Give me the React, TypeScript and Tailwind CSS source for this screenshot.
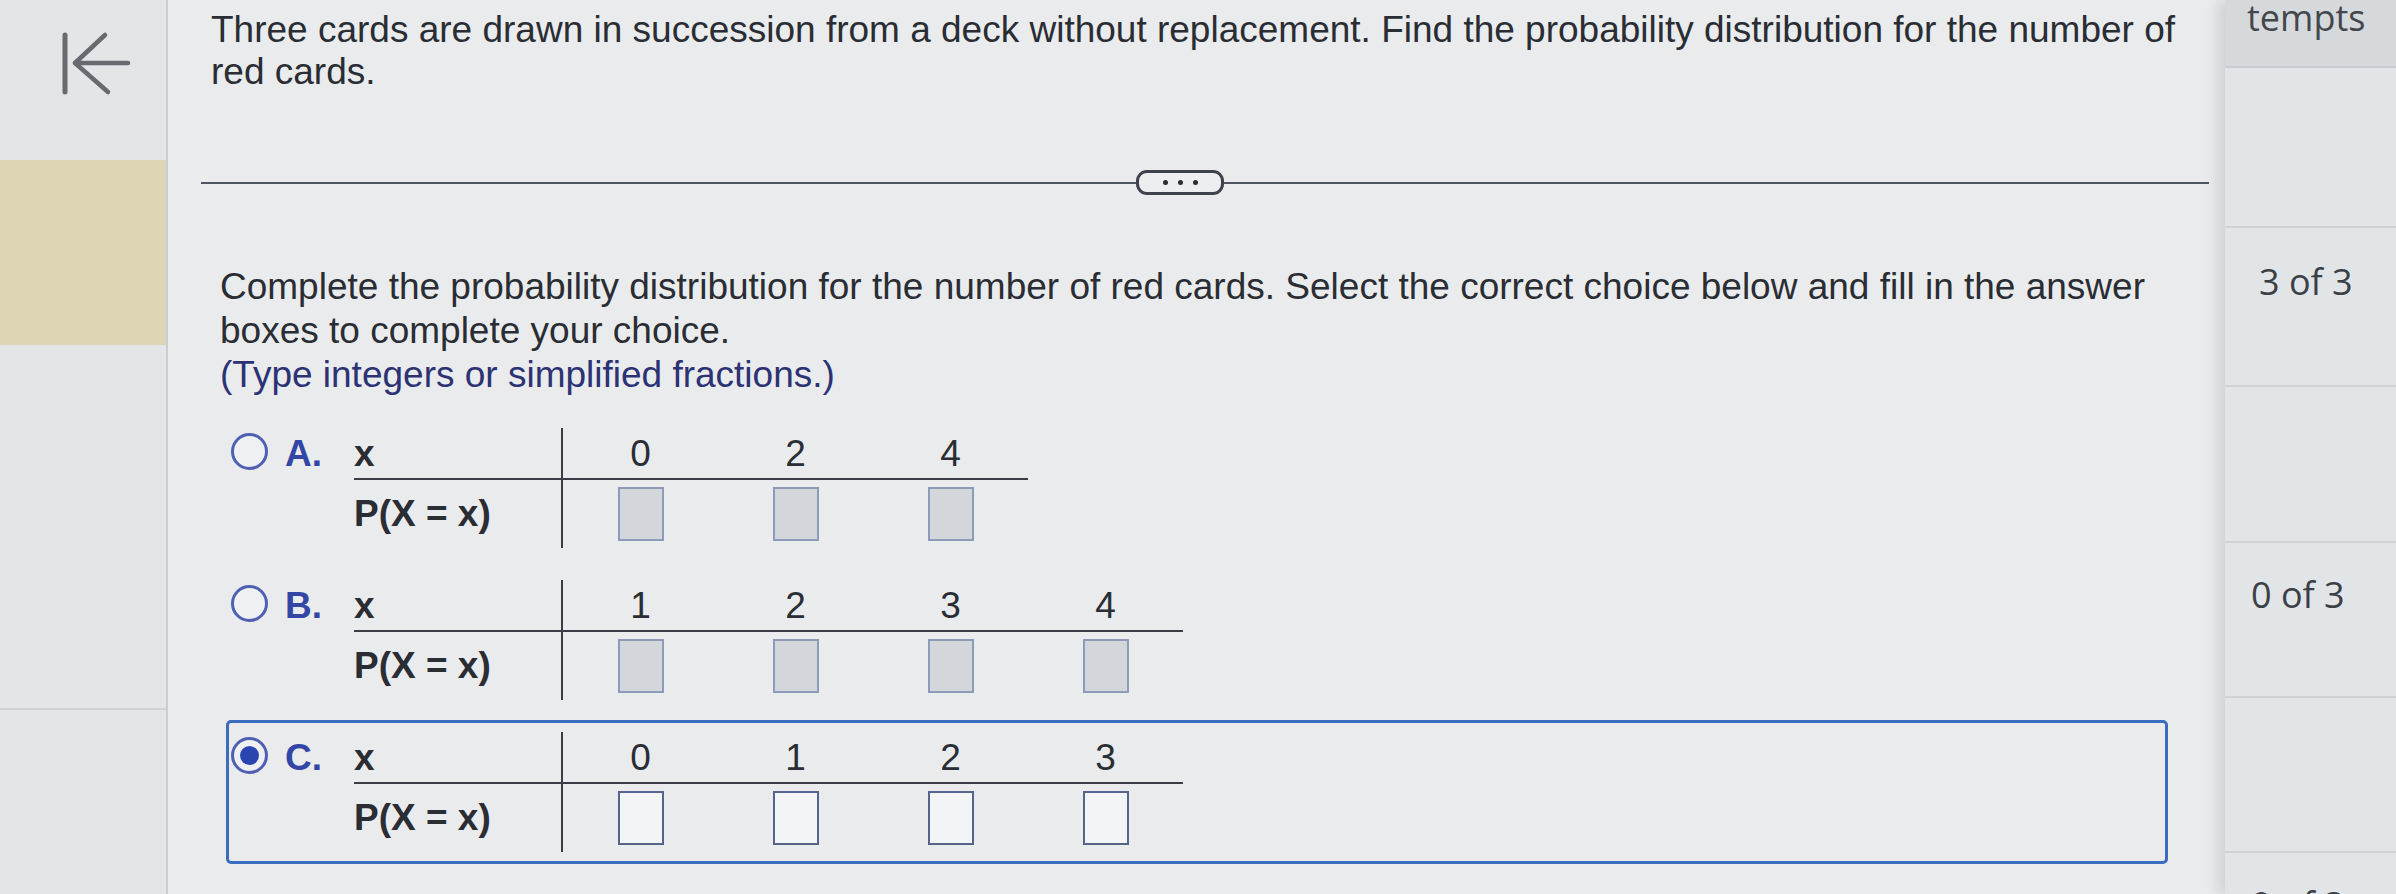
import React from "react";

type Choice = {
  letter: string;
  values: string[];
  selected?: boolean;
};

const choices: Choice[] = [
  { letter: "A.", values: ["0", "2", "4"] },
  { letter: "B.", values: ["1", "2", "3", "4"] },
  { letter: "C.", values: ["0", "1", "2", "3"], selected: true },
];

const gridCols: Record<number, string> = {
  3: "grid-cols-[209px_repeat(3,155px)]",
  4: "grid-cols-[209px_repeat(4,155px)]",
};

function BackIcon() {
  return (
    <svg width="80" height="70" viewBox="0 0 80 70" fill="none" aria-hidden="true">
      <path d="M10 5 V62" stroke="#676b70" strokeWidth="5" strokeLinecap="round" />
      <path d="M20 33 H73" stroke="#676b70" strokeWidth="4.5" strokeLinecap="round" />
      <path d="M50 5 L20 33 L53 62" stroke="#676b70" strokeWidth="4.5" strokeLinecap="round" strokeLinejoin="round" />
    </svg>
  );
}

function Radio({ checked }: { checked?: boolean }) {
  return (
    <div className="mt-[5px] flex h-[37px] w-[37px] shrink-0 items-center justify-center rounded-full border-[3px] border-[#4f5fb2] bg-[#eef0f3]">
      {checked ? <div className="h-[19px] w-[19px] rounded-full bg-[#2b45b0]" /> : null}
    </div>
  );
}

function AnswerBox({ active }: { active?: boolean }) {
  return active ? (
    <div className="h-[54px] w-[46px] border-2 border-[#56648c] bg-[#f3f4f6]" />
  ) : (
    <div className="h-[54px] w-[46px] border-2 border-[#8e9bb8] bg-[#d3d6da]" />
  );
}

function ChoiceRow({ choice }: { choice: Choice }) {
  return (
    <div
      className={
        choice.selected
          ? "flex items-start rounded-[5px] border-[3px] border-[#3b6cc0] px-[2px] py-[9px]"
          : "flex items-start rounded-[5px] border-[3px] border-transparent px-[2px] py-[9px]"
      }
    >
      <Radio checked={choice.selected} />
      <div className="ml-[17px] w-[69px] text-[37px] font-bold leading-[52px] text-[#3346a6]">
        {choice.letter}
      </div>
      <div className={`grid ${gridCols[choice.values.length]}`}>
        <div className="h-[52px] border-r-2 border-b-2 border-[#393c42] text-[37px] font-bold leading-[52px]">x</div>
        {choice.values.map((v, i) => (
          <div key={i} className="h-[52px] border-b-2 border-[#393c42] text-center text-[37px] leading-[52px]">
            {v}
          </div>
        ))}
        <div className="flex h-[68px] items-center border-r-2 border-[#393c42] text-[37px] font-bold">P(X = x)</div>
        {choice.values.map((_, i) => (
          <div key={i} className="flex h-[68px] items-center justify-center">
            <AnswerBox active={choice.selected} />
          </div>
        ))}
      </div>
    </div>
  );
}

export default function App() {
  return (
    <div className="flex h-[894px] w-[2396px] overflow-hidden bg-[#e9ebed]">
      {/* left rail */}
      <aside className="flex w-[166px] shrink-0 flex-col bg-[#e3e5e7]">
        <div className="h-[160px] pl-[55px] pt-[30px]">
          <BackIcon />
        </div>
        <div className="h-[185px] bg-[#ddd5b3]" />
        <div className="h-[365px] border-b-2 border-[#d0d3d6]" />
        <div className="flex-1" />
      </aside>

      {/* question */}
      <main
        className="flex-1 border-l-2 border-[#caced2] bg-[#e9ebed] text-[#2a2d33]"
        style={{ fontFamily: '"Liberation Sans", Arial, sans-serif' }}
      >
        <p className="pl-[43px] pt-[9px] text-[37px] leading-[42px]">
          Three cards are drawn in succession from a deck without replacement. Find the probability distribution for the number of
          <br />
          red cards.
        </p>

        <div className="ml-[33px] mr-[16px] mt-[77px] flex items-center">
          <div className="h-[2px] w-[935px] bg-[#4e5460]" />
          <div className="flex h-[25px] w-[88px] items-center justify-center gap-[10px] rounded-[11px] border-[3px] border-[#3d424c] bg-[#eceef0]">
            <span className="h-[5px] w-[5px] rounded-full bg-[#2a2d33]" />
            <span className="h-[5px] w-[5px] rounded-full bg-[#2a2d33]" />
            <span className="h-[5px] w-[5px] rounded-full bg-[#2a2d33]" />
          </div>
          <div className="h-[2px] flex-1 bg-[#4e5460]" />
        </div>

        <div className="mt-[70px] pl-[52px] text-[37px] leading-[44px]">
          <p>
            Complete the probability distribution for the number of red cards. Select the correct choice below and fill in the answer
            <br />
            boxes to complete your choice.
          </p>
          <p className="text-[#2c3273]">(Type integers or simplified fractions.)</p>
        </div>

        <div className="ml-[58px] mt-[19px] flex w-[1942px] flex-col gap-[8px]">
          {choices.map((c) => (
            <ChoiceRow key={c.letter} choice={c} />
          ))}
        </div>
      </main>

      {/* attempts column */}
      <aside
        className="w-[171px] shrink-0 bg-[#e2e5e8] text-[36px] leading-[36px] text-[#3b4046] shadow-[-8px_0_12px_rgba(0,0,0,0.10)]"
        style={{ fontFamily: '"Open Sans", sans-serif' }}
      >
        <div className="h-[68px] border-b-2 border-[#c9ccd0] bg-[#d6d9dc] pl-[22px] text-[#43474c]">tempts</div>
        <div className="h-[160px] border-b-2 border-[#d0d3d6]" />
        <div className="h-[159px] border-b-2 border-[#d0d3d6] pl-[34px] pt-[36px]">3 of 3</div>
        <div className="h-[156px] border-b-2 border-[#d0d3d6]" />
        <div className="h-[155px] border-b-2 border-[#d0d3d6] pl-[26px] pt-[34px]">0 of 3</div>
        <div className="h-[155px] border-b-2 border-[#d0d3d6]" />
        <div className="pl-[26px] pt-[34px]">0 of 3</div>
      </aside>
    </div>
  );
}
